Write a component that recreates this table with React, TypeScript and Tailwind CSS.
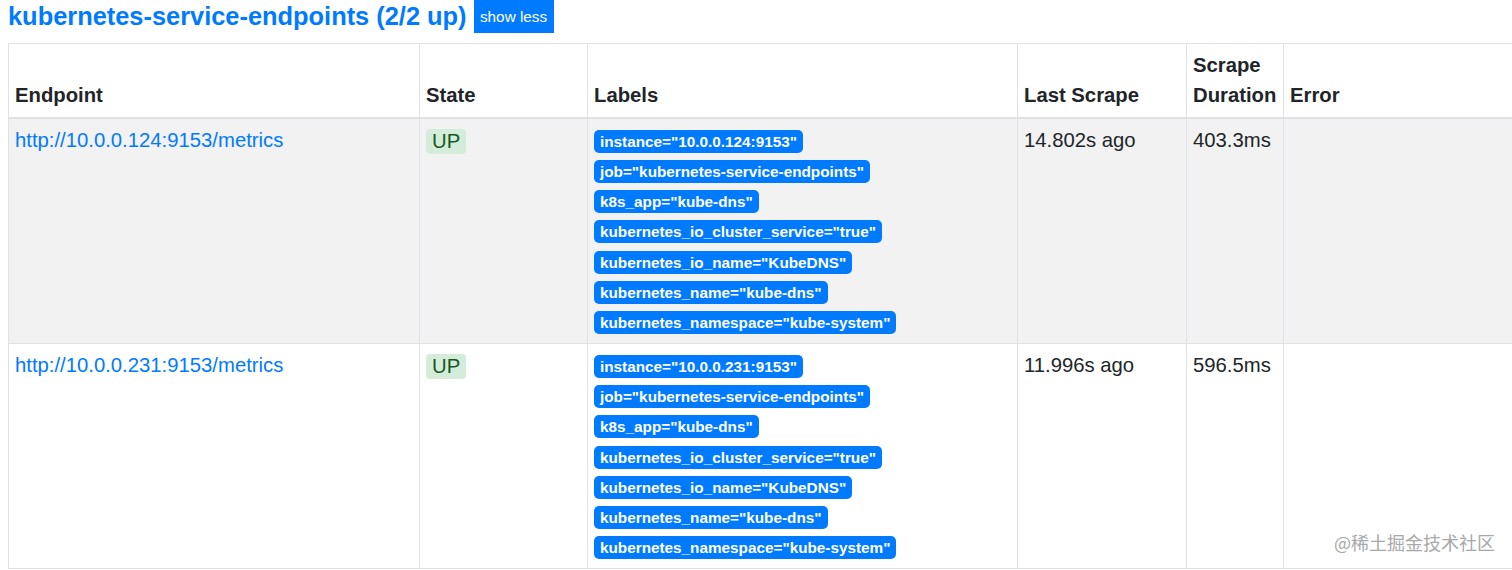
import React from 'react'

const targets = [
  {
    endpoint: 'http://10.0.0.124:9153/metrics',
    instance: '10.0.0.124:9153',
    lastScrape: '14.802s ago',
    duration: '403.3ms',
  },
  {
    endpoint: 'http://10.0.0.231:9153/metrics',
    instance: '10.0.0.231:9153',
    lastScrape: '11.996s ago',
    duration: '596.5ms',
  },
]

const labelsFor = (instance: string) => [
  `instance="${instance}"`,
  'job="kubernetes-service-endpoints"',
  'k8s_app="kube-dns"',
  'kubernetes_io_cluster_service="true"',
  'kubernetes_io_name="KubeDNS"',
  'kubernetes_name="kube-dns"',
  'kubernetes_namespace="kube-system"',
]

const App: React.FC = () => {
  return (
    <div className="relative w-[1512px] h-[570px] overflow-hidden bg-white text-[#212529] font-['Liberation_Sans',Arial,sans-serif]">
      <div className="flex items-start pl-[8px]">
        <h2 className="mt-[1px] text-[25.4px] leading-[30px] font-bold text-[#007bff]">
          kubernetes-service-endpoints (2/2 up)
        </h2>
        <button className="ml-[7px] h-[33px] w-[80px] bg-[#007bff] text-white text-[15.3px] leading-[33px] text-center">
          show less
        </button>
      </div>

      <div className="mt-[10px] pl-[8px]">
        <table className="w-[1530px] table-fixed border-collapse text-[20.3px] leading-[30.3px]">
          <thead>
            <tr className="font-bold text-left">
              <th className="w-[411px] border border-[#dee2e6] border-b-2 px-[6px] py-[6px] align-bottom">Endpoint</th>
              <th className="w-[168px] border border-[#dee2e6] border-b-2 px-[6px] py-[6px] align-bottom">State</th>
              <th className="w-[430px] border border-[#dee2e6] border-b-2 px-[6px] py-[6px] align-bottom">Labels</th>
              <th className="w-[169px] border border-[#dee2e6] border-b-2 px-[6px] py-[6px] align-bottom">Last Scrape</th>
              <th className="w-[97px] border border-[#dee2e6] border-b-2 px-[6px] py-[6px] align-bottom">Scrape Duration</th>
              <th className="border border-[#dee2e6] border-b-2 border-r-0 px-[6px] py-[6px] align-bottom">Error</th>
            </tr>
          </thead>
          <tbody>
            {targets.map((t, i) => (
              <tr key={i} className={i === 0 ? 'bg-[#f2f2f2]' : 'bg-white'}>
                <td className="border border-[#dee2e6] px-[6px] py-[6px] align-top">
                  <a className="text-[#007bff]">{t.endpoint}</a>
                </td>
                <td className="border border-[#dee2e6] px-[6px] py-[6px] align-top">
                  <span className="inline-block mt-[4px] px-[6px] h-[25px] leading-[25px] rounded-[4px] bg-[#d4edda] text-[#155724]">
                    UP
                  </span>
                </td>
                <td className="border border-[#dee2e6] px-[6px] py-[6px] align-top">
                  {labelsFor(t.instance).map((l, j) => (
                    <React.Fragment key={j}>
                      <span className="inline-block px-[6px] py-[4px] text-[15.3px] leading-[15px] font-bold text-white bg-[#007bff] rounded-[5px] whitespace-nowrap">
                        {l}
                      </span>
                      <br />
                    </React.Fragment>
                  ))}
                </td>
                <td className="border border-[#dee2e6] px-[6px] py-[6px] align-top">{t.lastScrape}</td>
                <td className="border border-[#dee2e6] px-[6px] py-[6px] align-top">{t.duration}</td>
                <td className="border border-[#dee2e6] border-r-0 px-[6px] py-[6px] align-top"></td>
              </tr>
            ))}
          </tbody>
        </table>
      </div>

      <div className="absolute right-[17px] top-[530px] text-[18px] leading-[24px] text-[#a8a8a8] font-['Noto_Sans_CJK_SC',sans-serif]">
        @稀土掘金技术社区
      </div>
    </div>
  )
}

export default App
